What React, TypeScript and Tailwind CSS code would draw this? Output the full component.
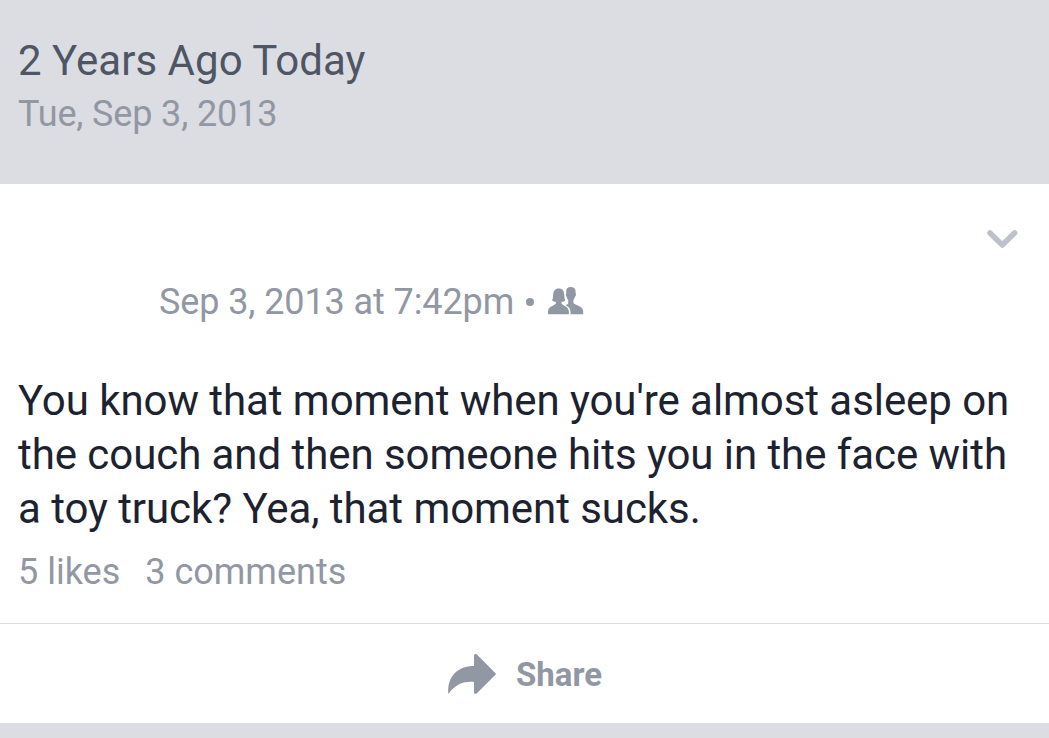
import React from "react";

interface Post {
  postedAt: string;
  content: string[];
  likes: number;
  comments: number;
}

const post: Post = {
  postedAt: "Sep 3, 2013 at 7:42pm",
  content: [
    "You know that moment when you're almost asleep on",
    "the couch and then someone hits you in the face with",
    "a toy truck? Yea, that moment sucks.",
  ],
  likes: 5,
  comments: 3,
};

const ChevronIcon = () => (
  <svg className="h-[20px] w-[32px]" viewBox="0 0 32 20" fill="none" stroke="#bdc1c9" strokeWidth="5.5" strokeLinecap="round" strokeLinejoin="round">
    <path d="M4 4L16.300 16L28.600 4" />
  </svg>
);

const FriendsIcon = () => (
  <svg className="h-[28px] w-[36px]" viewBox="0 0 36 28" fill="#9197a3">
    <path d="M18.200 3.500C18.300 1.200 20 0 22.800 0c3.100 0 4.800 1.500 4.800 4.500v1.700c.8.8.4 2.700-.6 3.300-.3 1.600-.9 2.700-1.600 3.500v3c1.500 2.300 9.800 2.600 9.800 8.400v2.900H22.600v-1.800c0-4.200-2-5.900-5.100-7.300.7-.5 2.200-.5 2.700-1.600v-3.600c-.7-.8-1.300-1.900-1.600-3.500-.6-.6-1-2-.4-3.100z" />
    <path d="M10.700 1.400c3.900 0 5.400 2.700 5.500 6.200.1 2.500.3 4.700 1.100 6-.9.9-2.300 1.200-3.800 1.200v1.700c1.500 2.500 7.300 2.600 7.300 8.200v2.600H0v-2.600c0-5.600 6.400-5.700 7.900-8.200v-1.700c-1.500 0-2.900-.3-3.800-1.200.8-1.300 1-3.500 1.100-6 .1-3.500 1.600-6.200 5.500-6.200z" />
  </svg>
);

const ShareIcon = () => (
  <svg className="h-[40px] w-[48px]" viewBox="0 0 48 40" fill="#9197a3">
    <path d="M26 1.600C26 0 27.700-.6 28.900.6L47.200 19c.8.8.8 1.200 0 2L28.900 39.200c-1.200 1.200-2.900.6-2.900-1V28C14 27 7.500 31 .3 40-1 23 9 12 26 12z" />
  </svg>
);

const MemoryHeader = () => (
  <header className="h-[184px] bg-[#dcdde3] pt-[35px] pl-[18px]">
    <h1 className="text-[42px] leading-[52px] tracking-[0.03px] text-[#4e5665]">2 Years Ago Today</h1>
    <p className="text-[36px] leading-[54px] tracking-[-0.14px] text-[#9197a3]">Tue, Sep 3, 2013</p>
  </header>
);

const PostCard = ({ postedAt, content, likes, comments }: Post) => (
  <article className="h-[539px] bg-white">
    <div className="flex h-[92px] justify-end pt-[45px] pr-[31px]">
      <button className="h-[20px]" aria-label="Post options">
        <ChevronIcon />
      </button>
    </div>
    <div className="flex h-[52px] items-center pl-[159px] text-[36px] text-[#9197a3]">
      <span className="tracking-[-0.1px]">{postedAt}</span>
      <span className="ml-[12px] h-[8px] w-[8px] rounded-full bg-[#9197a3]" />
      <span className="ml-[14px] -mt-[2px]">
        <FriendsIcon />
      </span>
    </div>
    <div className="mt-[46px] pl-[18px] text-[42px] leading-[54px] tracking-[-0.06px] text-[#1d2230]">
      {content.map((line) => (
        <p key={line} className="whitespace-nowrap">{line}</p>
      ))}
    </div>
    <div className="flex h-[87px] gap-[25px] pt-[9px] pl-[18px] text-[36px] leading-[54px] text-[#9197a3]">
      <span>{likes} likes</span>
      <span>{comments} comments</span>
    </div>
    <button className="flex h-[100px] w-full items-center justify-center gap-[20px] border-t border-[#dcdde3] pl-px text-[33px] font-bold text-[#9197a3]">
      <ShareIcon />
      <span className="pt-[2px]">Share</span>
    </button>
  </article>
);

export default function App() {
  return (
    <main className="h-[738px] overflow-hidden bg-[#dcdde3] font-['Roboto',sans-serif]">
      <MemoryHeader />
      <PostCard {...post} />
    </main>
  );
}
